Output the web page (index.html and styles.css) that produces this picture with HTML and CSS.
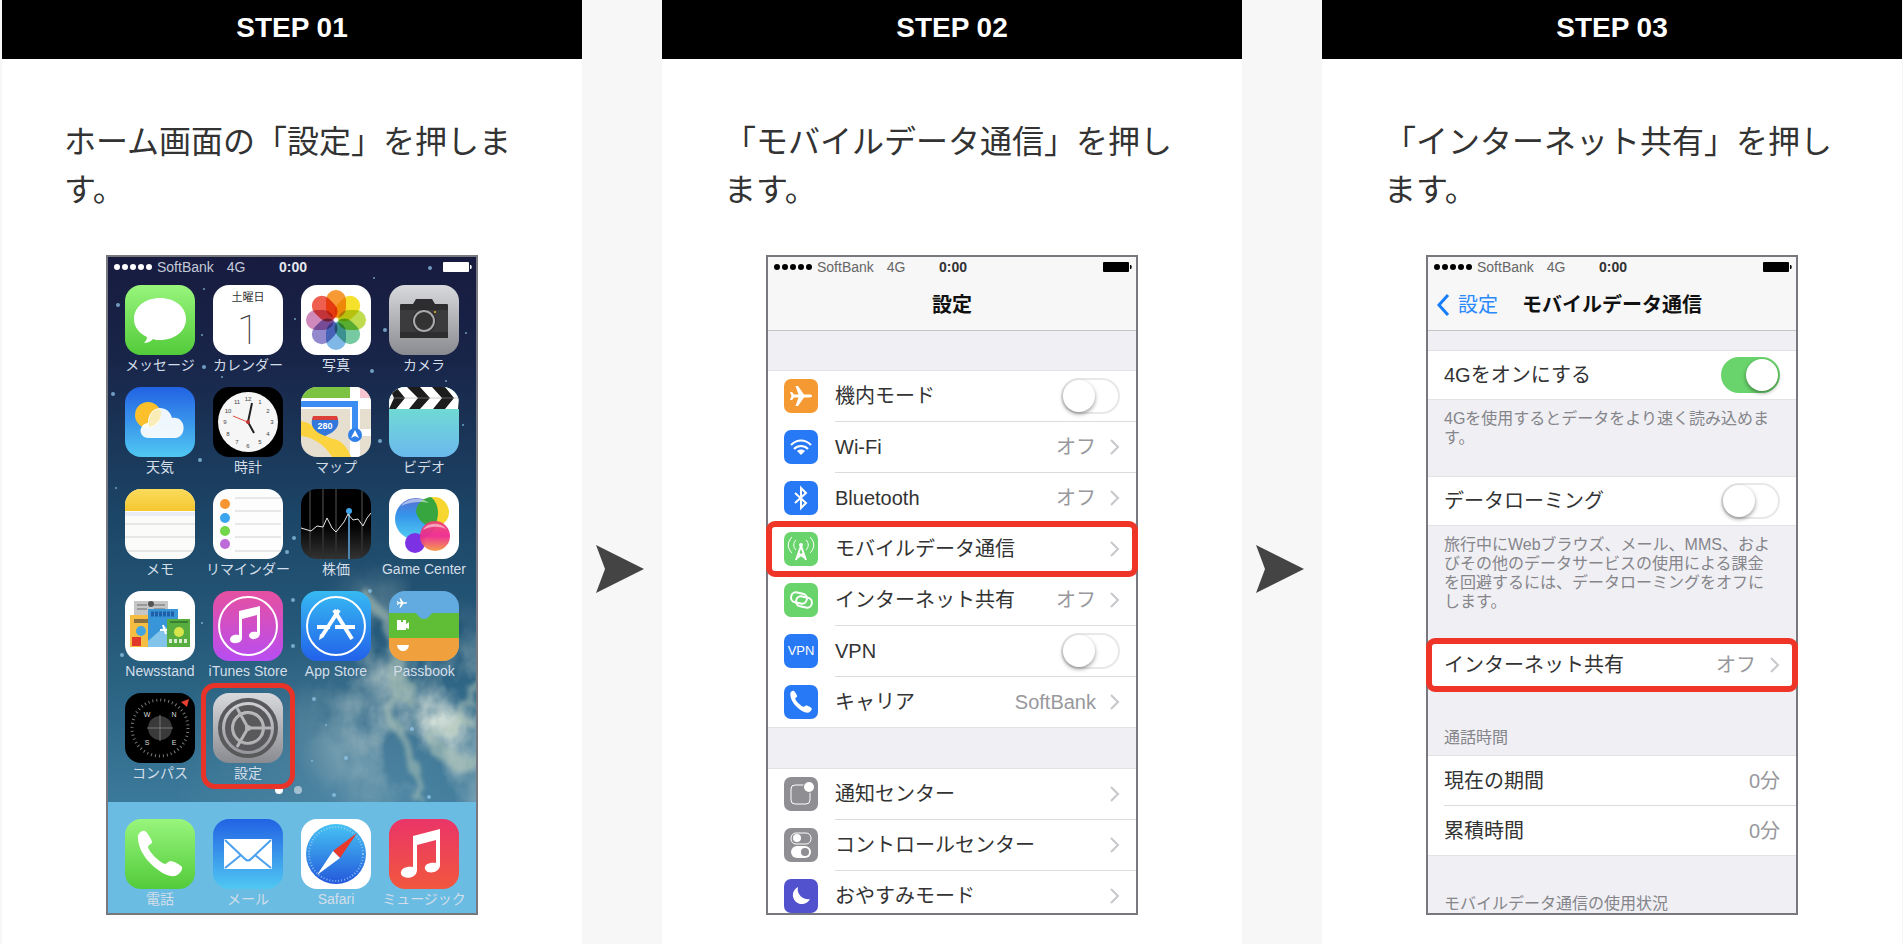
FILE: index.html
```
<!DOCTYPE html>
<html lang="ja">
  <head>
    <meta charset="UTF-8" />
    <meta name="viewport" content="width=device-width, initial-scale=1.0" />
    <title>インターネット共有の設定方法</title>
    <link rel="stylesheet" href="styles.css">
  </head>
  <body>
    <svg class="defs" aria-hidden="true">
      <defs>
        <symbol id="handset" viewBox="0 0 70 70">
          <path d="M13 19C12 15 17 11 20 12C22 13 27 21 27 23C27 25 23 26 23 28C24 33 34 43 40 45C42 45 43 42 46 42C48 42 56 46 57 48C58 51 54 56 50 57C43 58 34 53 25 44C18 37 13 27 13 19Z" />
        </symbol>
        <symbol id="note" viewBox="0 0 70 70">
          <path d="M24 17L51 10V46C51 54 38 56 36 50C35 45 41 43 47 44V21L28 26V51C28 60 14 61 12 55C11 49 18 47 24 48Z" />
        </symbol>
        <symbol id="plane" viewBox="0 0 34 34">
          <path d="M28 17C28 16 27 15.600 25 15.600H20L14 7H11.500L14.500 15.600H10L8 13H6L7.500 17L6 21H8L10 18.400H14.500L11.500 27H14L20 18.400H25C27 18.400 28 18 28 17Z" />
        </symbol>
        <symbol id="chevron" viewBox="0 0 10 18">
          <path d="M1 2L8 9L1 16" fill="none" stroke="#c7c7cc" stroke-width="2" />
        </symbol>
        <symbol id="battery" viewBox="0 0 29 10">
          <rect width="26" height="10" rx="1" />
          <path d="M27 3H28C29 4 29 6 28 7H27Z" />
        </symbol>
        <linearGradient id="green" x2="0" y2="1"><stop stop-color="#98f57c" /><stop offset="1" stop-color="#52cb3a" /></linearGradient>
        <linearGradient id="silver" x2="0" y2="1"><stop stop-color="#d8d9dc" /><stop offset="1" stop-color="#8a8b90" /></linearGradient>
        <linearGradient id="sky" x2="0" y2="1"><stop stop-color="#2262e4" /><stop offset="1" stop-color="#50c8f2" /></linearGradient>
        <linearGradient id="film" x2="0" y2="1"><stop stop-color="#72e8c8" /><stop offset="1" stop-color="#6bb9ee" /></linearGradient>
        <linearGradient id="yellow" x2="0" y2="1"><stop stop-color="#fadb5c" /><stop offset="1" stop-color="#f5c731" /></linearGradient>
        <linearGradient id="stock" x2="0" y2="1"><stop offset=".5" stop-color="#000" /><stop offset="1" stop-color="#333" /></linearGradient>
        <linearGradient id="itunes" x2="0" y2="1"><stop stop-color="#e650a0" /><stop offset="1" stop-color="#b84df2" /></linearGradient>
        <linearGradient id="appstore" x2="0" y2="1"><stop stop-color="#37baf2" /><stop offset="1" stop-color="#2261ea" /></linearGradient>
        <linearGradient id="music" x2="0" y2="1"><stop stop-color="#ea3568" /><stop offset="1" stop-color="#f1573e" /></linearGradient>
        <linearGradient id="safari" x2="0" y2="1"><stop stop-color="#46c3f3" /><stop offset="1" stop-color="#2458dc" /></linearGradient>
        <linearGradient id="bubble-blue" x2="0" y2="1"><stop stop-color="#5a6fd0" /><stop offset=".4" stop-color="#3594ea" /><stop offset="1" stop-color="#52cdf3" /></linearGradient>
        <linearGradient id="bubble-pink" x2="0" y2="1"><stop stop-color="#f0456a" /><stop offset=".5" stop-color="#ee2590" /><stop offset="1" stop-color="#f5993f" /></linearGradient>
      </defs>
    </svg>

    <main class="steps">
      <section class="step">
        <h2 class="step-title">STEP 01</h2>
        <div class="step-body">
          <p class="step-text">ホーム画面の「設定」を押します。</p>
          <div class="phone home">
            <svg class="wallpaper" viewBox="0 0 372 660" preserveAspectRatio="none" aria-hidden="true">
              <defs>
                <linearGradient id="night" x2="0" y2="1">
                  <stop stop-color="#171b3f" />
                  <stop offset=".15" stop-color="#182448" />
                  <stop offset=".4" stop-color="#1c4667" />
                  <stop offset=".65" stop-color="#2a6282" />
                  <stop offset="1" stop-color="#4c90b2" />
                </linearGradient>
                <radialGradient id="glow"><stop stop-color="#fff" /><stop offset="1" stop-color="#fff" stop-opacity="0" /></radialGradient>
                <filter id="cloud" x="0" y="0" width="1" height="1">
                  <feTurbulence type="fractalNoise" baseFrequency=".014 .011" numOctaves="5" seed="8" />
                  <feColorMatrix values="0 0 0 0 .66  0 0 0 0 .74  0 0 0 0 .68  3.4 0 0 0 -1.300" />
                </filter>
                <filter id="rough" x="-.3" y="-.3" width="1.600" height="1.600">
                  <feTurbulence type="fractalNoise" baseFrequency=".04" numOctaves="4" seed="3" />
                  <feDisplacementMap in="SourceGraphic" scale="34" />
                  <feGaussianBlur stdDeviation="2" />
                </filter>
                <mask id="fade">
                  <ellipse cx="330" cy="465" rx="150" ry="125" fill="url(#glow)" />
                  <ellipse cx="280" cy="400" rx="80" ry="110" fill="url(#glow)" opacity=".5" />
                </mask>
              </defs>
              <rect width="372" height="660" fill="url(#night)" />
              <ellipse cx="250" cy="500" rx="190" ry="130" fill="url(#glow)" opacity=".12" />
              <rect width="372" height="660" filter="url(#cloud)" mask="url(#fade)" />
              <g filter="url(#rough)" fill="none" stroke="#b5c9b8" opacity=".5">
                <path d="M262 340C284 375 302 410 296 445C272 462 302 480 312 520L316 550" stroke-width="9" />
                <path d="M380 430C356 448 362 472 336 480C314 490 338 512 378 502" stroke-width="13" />
              </g>
              <g fill="#8fc6e8" opacity=".75">
                <circle cx="324" cy="13" r="2" /><circle cx="268" cy="23" r="1" /><circle cx="12" cy="50" r="2" /><circle cx="279" cy="75" r="2" />
                <circle cx="7" cy="139" r="2" /><circle cx="98" cy="112" r="2" /><circle cx="94" cy="205" r="2" /><circle cx="274" cy="186" r="2" />
                <circle cx="266" cy="116" r="2" /><circle cx="98" cy="34" r="1" /><circle cx="357" cy="170" r="1" /><circle cx="188" cy="283" r="2" />
                <circle cx="181" cy="297" r="2" /><circle cx="10" cy="233" r="1" /><circle cx="16" cy="400" r="2" /><circle cx="187" cy="345" r="2" />
                <circle cx="187" cy="391" r="2" /><circle cx="208" cy="444" r="2" /><circle cx="96" cy="368" r="1" /><circle cx="220" cy="470" r="1" />
                <circle cx="206" cy="506" r="1" /><circle cx="240" cy="503" r="2" /><circle cx="228" cy="540" r="2" /><circle cx="30" cy="505" r="1" />
                <circle cx="306" cy="474" r="2" /><circle cx="323" cy="542" r="2" /><circle cx="264" cy="336" r="2" /><circle cx="340" cy="126" r="1" />
                <circle cx="96" cy="80" r="1" /><circle cx="189" cy="64" r="1" /><circle cx="360" cy="78" r="1" /><circle cx="116" cy="122" r="1" />
              </g>
            </svg>
            <div class="status status-light">
              <span class="carrier"><span class="signal"><i></i><i></i><i></i><i></i><i></i></span>SoftBank<span>4G</span></span>
              <time>0:00</time>
              <svg class="battery" aria-hidden="true"><use href="#battery" /></svg>
            </div>
            <nav class="apps">
              <a class="app" href="#">
                <svg class="app-icon" viewBox="0 0 70 70"><rect width="70" height="70" fill="url(#green)" /><path d="M35 13C50 13 61 22 61 34C61 46 50 55 35 55C32 55 30 55 28 54C25 57 22 58 19 58C21 56 22 54 22 52C14 48 9 42 9 34C9 22 20 13 35 13Z" fill="#fff" /></svg>
                <span>メッセージ</span>
              </a>
              <a class="app" href="#">
                <span class="app-icon calendar"><span class="weekday">土曜日</span><span class="day">1</span></span>
                <span>カレンダー</span>
              </a>
              <a class="app" href="#">
                <svg class="app-icon petals" viewBox="0 0 70 70">
                  <rect width="70" height="70" fill="#fff" />
                  <rect x="25" y="5" width="20" height="28" rx="10" fill="#f79a33" />
                  <rect x="25" y="5" width="20" height="28" rx="10" fill="#f5e12c" transform="rotate(45 35 35)" />
                  <rect x="25" y="5" width="20" height="28" rx="10" fill="#bedc4e" transform="rotate(90 35 35)" />
                  <rect x="25" y="5" width="20" height="28" rx="10" fill="#76c9a0" transform="rotate(135 35 35)" />
                  <rect x="25" y="5" width="20" height="28" rx="10" fill="#7fb7e6" transform="rotate(180 35 35)" />
                  <rect x="25" y="5" width="20" height="28" rx="10" fill="#9189cb" transform="rotate(225 35 35)" />
                  <rect x="25" y="5" width="20" height="28" rx="10" fill="#cf8abb" transform="rotate(270 35 35)" />
                  <rect x="25" y="5" width="20" height="28" rx="10" fill="#ee5f4f" transform="rotate(315 35 35)" />
                </svg>
                <span>写真</span>
              </a>
              <a class="app" href="#">
                <svg class="app-icon" viewBox="0 0 70 70">
                  <rect width="70" height="70" fill="url(#silver)" />
                  <path d="M12 19H24L27 14H43L46 19H58C59 19 59 20 59 20V52C59 53 59 53 58 53H12C11 53 11 53 11 52V20C11 19 12 19 12 19Z" fill="#2d2d2f" />
                  <path d="M11 25H59V47H11Z" fill="#3b3b3d" />
                  <circle cx="35" cy="36" r="12" fill="#29292b" /><circle cx="35" cy="36" r="10" fill="#333" stroke="#a9a9ac" stroke-width="2" />
                  <circle cx="46" cy="27" r="1" fill="#f5b32c" />
                </svg>
                <span>カメラ</span>
              </a>

              <a class="app" href="#">
                <svg class="app-icon" viewBox="0 0 70 70"><rect width="70" height="70" fill="url(#sky)" /><circle cx="23" cy="28" r="13" fill="#fbc02b" /><path d="M24 51C13 51 13 37 23 36C23 17 44 17 47 31C62 29 62 51 50 51Z" fill="#fff" opacity=".92" /><path d="M24 34C25 24 33 20 36 24C37 31 32 38 24 40Z" fill="#f6e6a0" opacity=".7" /></svg>
                <span>天気</span>
              </a>
              <a class="app" href="#">
                <svg class="app-icon" viewBox="0 0 70 70">
                  <rect width="70" height="70" fill="#000" /><circle cx="35" cy="35" r="30" fill="#f6f6f6" />
                  <g class="clock-face">
                    <text x="35" y="14">12</text><text x="47" y="17">1</text><text x="55" y="26">2</text><text x="59" y="37">3</text>
                    <text x="55" y="49">4</text><text x="47" y="57">5</text><text x="35" y="61">6</text><text x="24" y="57">7</text>
                    <text x="15" y="49">8</text><text x="12" y="37">9</text><text x="15" y="26">10</text><text x="24" y="17">11</text>
                  </g>
                  <path d="M35 35L39 16M35 35L41 46" stroke="#222" stroke-width="2" /><path d="M37 36L20 29" stroke="#e24b3b" />
                  <circle cx="35" cy="35" r="2" fill="#b33" />
                </svg>
                <span>時計</span>
              </a>
              <a class="app" href="#">
                <svg class="app-icon" viewBox="0 0 70 70">
                  <rect width="70" height="70" fill="#e6dfd0" /><path d="M0 0H49V11H0Z" fill="#7cc344" /><path d="M59 0H70V11H59Z" fill="#f6c5cf" />
                  <path d="M0 11H70V22H0ZM49 0H59V70H49ZM59 42H70V49H59Z" fill="#fff" />
                  <path d="M0 34C16 37 20 50 33 52C42 54 47 62 50 70H31C24 58 12 50 0 49Z" fill="#fbd33f" />
                  <path d="M0 17H54V44" fill="none" stroke="#3b8df2" stroke-width="6" />
                  <circle cx="54" cy="48" r="7" fill="#2f7fe8" /><path d="M54 43L58 51L54 49L50 51Z" fill="#fff" />
                  <path d="M12 30C16 32 19 31 24 29C29 31 32 32 36 30C40 38 35 45 24 49C13 45 8 38 12 30Z" fill="#3277dc" /><path d="M12 29H36L37 33H11Z" fill="#dd4038" />
                  <text class="shield" x="24" y="42">280</text>
                </svg>
                <span>マップ</span>
              </a>
              <a class="app" href="#">
                <svg class="app-icon" viewBox="0 0 70 70">
                  <rect width="70" height="70" fill="url(#film)" /><path d="M0 0H70V22H0Z" fill="#fff" />
                  <path d="M0 0H7L16 11L7 22H0L5 11ZM18 0H31L41 11L31 22H20L29 11ZM43 0H56L65 11L56 22H44L53 11ZM67 0H70V22H69L70 11Z" fill="#1c1c1c" />
                  <path d="M0 11H70" stroke="#999" opacity=".5" />
                </svg>
                <span>ビデオ</span>
              </a>

              <a class="app" href="#">
                <svg class="app-icon" viewBox="0 0 70 70"><rect width="70" height="70" fill="#fbfbfa" /><path d="M0 0H70V22H0Z" fill="url(#yellow)" /><path d="M0 23H70V27H0Z" fill="#e9ecf4" /><path d="M0 35H70M0 48H70M0 62H70" stroke="#d2d2d2" /></svg>
                <span>メモ</span>
              </a>
              <a class="app" href="#">
                <svg class="app-icon" viewBox="0 0 70 70"><rect width="70" height="70" fill="#fdfdfd" /><path d="M22 9H68M22 22H68M22 35H68M22 48H68M22 62H68" stroke="#d2d2d2" /><circle cx="12" cy="15" r="5" fill="#f79533" /><circle cx="12" cy="29" r="5" fill="#3ba6ef" /><circle cx="12" cy="42" r="5" fill="#74d649" /><circle cx="12" cy="55" r="5" fill="#bd6bd8" /></svg>
                <span>リマインダー</span>
              </a>
              <a class="app" href="#">
                <svg class="app-icon" viewBox="0 0 70 70"><rect width="70" height="70" fill="url(#stock)" /><path d="M9 0V70M22 0V70M35 0V70M61 0V70" stroke="#2c2c2c" stroke-width="2" /><path d="M48 22V70" stroke="#4d86ae" stroke-width="2" /><path d="M0 39L10 42L16 37L22 38L26 29L31 39L35 43L43 33L47 25L52 31L57 30L62 37L66 29L70 24" fill="none" stroke="#e8e8e8" stroke-width="1" /><circle cx="48" cy="22" r="3" fill="#3fa4ea" /></svg>
                <span>株価</span>
              </a>
              <a class="app" href="#">
                <svg class="app-icon" viewBox="0 0 70 70"><rect width="70" height="70" fill="#fff" /><circle cx="45" cy="23" r="15" fill="#f6d62f" /><circle cx="27" cy="30" r="21" fill="url(#bubble-blue)" /><path d="M42 8C52 16 50 32 44 38C34 36 28 30 27 22C28 14 34 9 42 8Z" fill="#37a63e" /><circle cx="26" cy="54" r="10" fill="#7c32e4" /><circle cx="46" cy="47" r="15" fill="url(#bubble-pink)" opacity=".94" /><path d="M12 17C17 9 32 7 40 14C32 12 20 13 12 17ZM34 41C38 33 52 33 57 40C50 37 42 37 34 41Z" fill="#fff" opacity=".5" /></svg>
                <span>Game Center</span>
              </a>

              <a class="app" href="#">
                <svg class="app-icon" viewBox="0 0 70 70">
                  <rect width="70" height="70" fill="#fff" /><rect x="9" y="10" width="34" height="16" fill="#c6c6c6" /><path d="M12 14H22M29 14H40M12 18H22M29 18H40" stroke="#999" stroke-width="2" /><circle cx="26" cy="13" r="3" fill="#555" />
                  <rect x="5" y="24" width="20" height="32" fill="#f5bd42" /><path d="M9 30H23" stroke="#8d7040" stroke-width="4" /><circle cx="16" cy="40" r="5" fill="#45a5dd" /><rect x="7" y="46" width="9" height="9" fill="#e0392c" />
                  <rect x="23" y="18" width="30" height="38" fill="#3795d8" /><path d="M26 23H50" stroke="#1e5fa5" stroke-width="5" stroke-dasharray="3 1" /><path d="M23 50L40 35L43 39V56H23Z" fill="#83c4ea" /><path d="M38 34L41 43M35 39H43" stroke="#fff" stroke-width="2" />
                  <rect x="42" y="28" width="23" height="28" fill="#57ad3f" /><path d="M45 31H63" stroke="#387f32" stroke-width="2" /><circle cx="54" cy="41" r="5" fill="#d7e54b" /><path d="M44 50H63" stroke="#d9edd3" stroke-width="4" stroke-dasharray="3 2" />
                </svg>
                <span>Newsstand</span>
              </a>
              <a class="app" href="#">
                <svg class="app-icon" viewBox="0 0 70 70"><rect width="70" height="70" fill="url(#itunes)" /><circle cx="35" cy="35" r="29" fill="none" stroke="#fff" stroke-width="2" /><path d="M26 20L47 15V42C47 49 37 50 36 45C36 41 40 40 44 41V24L29 28V47C29 53 18 54 17 49C17 44 22 43 26 44Z" fill="#fff" /></svg>
                <span>iTunes Store</span>
              </a>
              <a class="app" href="#">
                <svg class="app-icon" viewBox="0 0 70 70"><rect width="70" height="70" fill="url(#appstore)" /><circle cx="35" cy="35" r="29" fill="none" stroke="#fff" stroke-width="2" /><path d="M38 19L21 45M33 19L51 48M16 36H29M34 36H54" fill="none" stroke="#fff" stroke-width="4" /><path d="M19 43L23 46L18 49Z" fill="#fff" /></svg>
                <span>App Store</span>
              </a>
              <a class="app" href="#">
                <svg class="app-icon" viewBox="0 0 70 70"><rect width="70" height="70" fill="#62abe0" /><path d="M0 22H26C29 22 29 28 35 28C41 28 41 22 44 22H70V47H0Z" fill="#5fbe36" /><path d="M0 47H70V70H0Z" fill="#f0a03c" /><use href="#plane" x="5" y="4" width="16" height="16" fill="#fff" /><path d="M8 29H12V31H14V29H17V33L20 31V38L17 37V39H8Z" fill="#fff" /><path d="M8 54H20C19 62 9 62 8 54Z" fill="#fff" /></svg>
                <span>Passbook</span>
              </a>

              <a class="app" href="#">
                <svg class="app-icon" viewBox="0 0 70 70">
                  <rect width="70" height="70" fill="#000" /><circle cx="35" cy="35" r="28" fill="none" stroke="#777" stroke-width="3" stroke-dasharray="1 3" />
                  <circle cx="35" cy="35" r="12" fill="#3a3a3a" /><path d="M35 22V48M22 35H48" stroke="#777" stroke-width="1" /><path d="M56 9L64 6L62 14Z" fill="#e8402f" />
                  <g class="compass-points"><text x="22" y="24">W</text><text x="49" y="24">N</text><text x="22" y="52">S</text><text x="49" y="52">E</text></g>
                </svg>
                <span>コンパス</span>
              </a>
              <a class="app app-target" href="#">
                <svg class="app-icon" viewBox="0 0 70 70">
                  <rect width="70" height="70" fill="url(#silver)" />
                  <g fill="none" stroke="#59595c"><circle cx="35" cy="35" r="28" stroke-width="4" /><circle cx="35" cy="35" r="20" stroke-width="6" /></g>
                  <circle cx="35" cy="35" r="14" fill="#59595c" /><circle cx="35" cy="35" r="15" fill="none" stroke="#b4b4b7" stroke-width="2" />
                  <path d="M35 35H58M35 35L24 15M35 35L24 54" stroke="#b4b4b7" stroke-width="3" /><circle cx="35" cy="35" r="3" fill="#b4b4b7" />
                </svg>
                <span>設定</span>
              </a>
            </nav>
            <div class="pager"><i></i><i></i></div>
            <nav class="dock">
              <a class="app" href="#">
                <svg class="app-icon" viewBox="0 0 70 70"><rect width="70" height="70" fill="url(#green)" /><use href="#handset" width="70" height="70" fill="#fff" /></svg>
                <span>電話</span>
              </a>
              <a class="app" href="#">
                <svg class="app-icon" viewBox="0 0 70 70"><rect width="70" height="70" fill="url(#sky)" /><rect x="11" y="20" width="48" height="30" rx="1" fill="#fff" /><path d="M12 21L32 40C34 42 36 42 38 40L58 21M12 49L28 36M58 49L42 36" fill="none" stroke="#4aa0ee" stroke-width="2" /></svg>
                <span>メール</span>
              </a>
              <a class="app" href="#">
                <svg class="app-icon" viewBox="0 0 70 70"><rect width="70" height="70" fill="#fff" /><circle cx="35" cy="35" r="30" fill="url(#safari)" /><circle cx="35" cy="35" r="27" fill="none" stroke="#a8d8f8" stroke-width="2" stroke-dasharray="1 2" opacity=".7" /><path d="M56 14L39 39L32 32Z" fill="#e9392c" /><path d="M16 56L32 32L39 39Z" fill="#fff" /></svg>
                <span>Safari</span>
              </a>
              <a class="app" href="#">
                <svg class="app-icon" viewBox="0 0 70 70"><rect width="70" height="70" fill="url(#music)" /><use href="#note" width="70" height="70" fill="#fff" /></svg>
                <span>ミュージック</span>
              </a>
            </nav>
          </div>
        </div>
      </section>

      <svg class="arrow" viewBox="0 0 48 48" aria-hidden="true"><path d="M0 0L48 24L0 48L9 24Z" /></svg>

      <section class="step">
        <h2 class="step-title">STEP 02</h2>
        <div class="step-body">
          <p class="step-text">「モバイルデータ通信」を押します。</p>
          <div class="phone">
            <header class="topbar">
              <div class="status">
                <span class="carrier"><span class="signal"><i></i><i></i><i></i><i></i><i></i></span>SoftBank<span>4G</span></span>
                <time>0:00</time>
                <svg class="battery" aria-hidden="true"><use href="#battery" /></svg>
              </div>
              <div class="navbar"><h3>設定</h3></div>
            </header>
            <ul class="list list-icons">
              <li>
                <label class="row" for="airplane">
                  <svg class="row-icon orange" viewBox="0 0 34 34"><use href="#plane" fill="#fff" /></svg>
                  <span class="row-label">機内モード</span>
                  <input class="switch" type="checkbox" id="airplane" />
                </label>
              </li>
              <li>
                <a class="row" href="#">
                  <svg class="row-icon blue" viewBox="0 0 34 34"><g fill="none" stroke="#fff" stroke-width="2"><path d="M7 15C13 9 21 9 27 15M10 19C14 15 20 15 24 19" /></g><path d="M13 21C15 19 19 19 21 21L17 25Z" fill="#fff" /></svg>
                  <span class="row-label">Wi-Fi</span><span class="value">オフ</span>
                  <svg class="chevron"><use href="#chevron" /></svg>
                </a>
              </li>
              <li>
                <a class="row" href="#">
                  <svg class="row-icon blue" viewBox="0 0 34 34"><path d="M11 12L22 22L17 27V7L22 12L11 22" fill="none" stroke="#fff" stroke-width="2" /></svg>
                  <span class="row-label">Bluetooth</span><span class="value">オフ</span>
                  <svg class="chevron"><use href="#chevron" /></svg>
                </a>
              </li>
              <li>
                <a class="row row-target" href="#">
                  <svg class="row-icon lime" viewBox="0 0 34 34"><g fill="none" stroke="#fff"><path d="M17 14L12 28M17 14L22 28M14 21L21 26M20 21L13 26" stroke-width="2" /><path d="M12 8C9 11 9 15 12 18M8 5C3 10 3 16 8 21M22 8C25 11 25 15 22 18M26 5C31 10 31 16 26 21" stroke-width="1" /></g><circle cx="17" cy="13" r="2" fill="#fff" /></svg>
                  <span class="row-label">モバイルデータ通信</span>
                  <svg class="chevron"><use href="#chevron" /></svg>
                </a>
              </li>
              <li>
                <a class="row" href="#">
                  <svg class="row-icon lime" viewBox="0 0 34 34"><g fill="none" stroke="#fff" stroke-width="2"><rect x="7" y="10" width="16" height="10" rx="5" transform="rotate(12 15 15)" /><rect x="12" y="14" width="16" height="10" rx="5" transform="rotate(12 20 19)" /></g></svg>
                  <span class="row-label">インターネット共有</span><span class="value">オフ</span>
                  <svg class="chevron"><use href="#chevron" /></svg>
                </a>
              </li>
              <li>
                <label class="row" for="vpn">
                  <span class="row-icon blue vpn">VPN</span>
                  <span class="row-label">VPN</span>
                  <input class="switch" type="checkbox" id="vpn" />
                </label>
              </li>
              <li>
                <a class="row" href="#">
                  <svg class="row-icon blue" viewBox="0 0 34 34"><use href="#handset" width="34" height="34" fill="#fff" /></svg>
                  <span class="row-label">キャリア</span><span class="value">SoftBank</span>
                  <svg class="chevron"><use href="#chevron" /></svg>
                </a>
              </li>
            </ul>
            <ul class="list list-icons">
              <li>
                <a class="row" href="#">
                  <svg class="row-icon gray" viewBox="0 0 34 34"><rect x="7" y="8" width="19" height="19" rx="4" fill="none" stroke="#fff" stroke-width="1" /><circle cx="25" cy="10" r="6" fill="#8e8e93" /><circle cx="25" cy="10" r="5" fill="#fff" /></svg>
                  <span class="row-label">通知センター</span>
                  <svg class="chevron"><use href="#chevron" /></svg>
                </a>
              </li>
              <li>
                <a class="row" href="#">
                  <svg class="row-icon gray" viewBox="0 0 34 34"><rect x="7" y="5" width="20" height="11" rx="5" fill="none" stroke="#fff" stroke-width="1" /><circle cx="13" cy="10" r="4" fill="#fff" /><rect x="7" y="18" width="20" height="12" rx="6" fill="#fff" /><circle cx="21" cy="24" r="4" fill="#8e8e93" /></svg>
                  <span class="row-label">コントロールセンター</span>
                  <svg class="chevron"><use href="#chevron" /></svg>
                </a>
              </li>
              <li>
                <a class="row" href="#">
                  <svg class="row-icon purple" viewBox="0 0 34 34"><path d="M14 8A9 9 0 1 0 26 20A10 10 0 0 1 14 8Z" fill="#fff" /></svg>
                  <span class="row-label">おやすみモード</span>
                  <svg class="chevron"><use href="#chevron" /></svg>
                </a>
              </li>
            </ul>
          </div>
        </div>
      </section>

      <svg class="arrow" viewBox="0 0 48 48" aria-hidden="true"><path d="M0 0L48 24L0 48L9 24Z" /></svg>

      <section class="step">
        <h2 class="step-title">STEP 03</h2>
        <div class="step-body">
          <p class="step-text">「インターネット共有」を押します。</p>
          <div class="phone">
            <header class="topbar">
              <div class="status">
                <span class="carrier"><span class="signal"><i></i><i></i><i></i><i></i><i></i></span>SoftBank<span>4G</span></span>
                <time>0:00</time>
                <svg class="battery" aria-hidden="true"><use href="#battery" /></svg>
              </div>
              <div class="navbar">
                <a class="back" href="#"><svg viewBox="0 0 14 24"><path d="M12 2L3 12L12 22" fill="none" stroke="#177efb" stroke-width="3" /></svg>設定</a>
                <h3>モバイルデータ通信</h3>
              </div>
            </header>
            <div class="list list-first">
              <label class="row" for="lte"><span class="row-label">4Gをオンにする</span><input class="switch" type="checkbox" id="lte" checked /></label>
            </div>
            <p class="note">4Gを使用するとデータをより速く読み込めます。</p>
            <div class="list">
              <label class="row" for="roaming"><span class="row-label">データローミング</span><input class="switch" type="checkbox" id="roaming" /></label>
            </div>
            <p class="note">旅行中にWebブラウズ、メール、MMS、およびその他のデータサービスの使用による課金を回避するには、データローミングをオフにします。</p>
            <div class="list">
              <a class="row row-target" href="#"><span class="row-label">インターネット共有</span><span class="value">オフ</span><svg class="chevron"><use href="#chevron" /></svg></a>
            </div>
            <h4 class="list-title">通話時間</h4>
            <ul class="list list-plain">
              <li><div class="row"><span class="row-label">現在の期間</span><span class="value">0分</span></div></li>
              <li><div class="row"><span class="row-label">累積時間</span><span class="value">0分</span></div></li>
            </ul>
            <h4 class="list-title">モバイルデータ通信の使用状況</h4>
          </div>
        </div>
      </section>
    </main>
  </body>
</html>
```
FILE: styles.css
```
* {
  box-sizing: border-box;
}
body {
  margin: 0;
  background-color: #f7f7f7;
  color: #333;
  font-family: "Liberation Sans", "Noto Sans CJK JP", sans-serif;
}
h2,
h3,
h4,
p,
ul {
  margin: 0;
  padding: 0;
}
ul {
  list-style: none;
}
a {
  color: inherit;
  text-decoration: none;
}
.defs {
  position: absolute;
  width: 0;
  height: 0;
}

/* steps */
.steps {
  display: flex;
  min-height: 100vh;
  padding: 0 1px 0 2px;
}
.step {
  flex: 1;
  min-width: 0;
  background-color: white;
}
.step-title {
  padding: 8px 0 11px;
  background-color: black;
  color: white;
  font-size: 28px;
  line-height: 40px;
  text-align: center;
}
.step-body {
  padding: 59px 62px 28px;
}
.step-text {
  margin-bottom: 41px;
  font-size: 32px;
  line-height: 48px;
}
.arrow {
  flex: none;
  width: 48px;
  height: 48px;
  margin: 545px 18px 0 14px;
  fill: #444;
}

/* phone */
.phone {
  position: relative;
  display: flex;
  flex-direction: column;
  width: 372px;
  max-width: 100%;
  height: 660px;
  margin: 0 auto;
  overflow: hidden;
  background-color: #efeff4;
}
.phone::after {
  content: "";
  position: absolute;
  inset: 0;
  border: 2px solid #77797e;
  pointer-events: none;
}
.phone > * {
  flex: none;
}
.status {
  display: grid;
  grid-template-columns: 1fr auto 1fr;
  align-items: center;
  height: 24px;
  padding: 0 6px 0 8px;
  color: #333;
  font-size: 14px;
  line-height: 24px;
}
.status time {
  font-weight: bold;
}
.status-light {
  color: #e4e8ee;
}
.carrier {
  display: flex;
  align-items: center;
  color: #666;
}
.status-light .carrier {
  color: #c3cad8;
}
.carrier span + span {
  margin-left: 13px;
}
.signal {
  display: flex;
  gap: 2px;
  margin-right: 5px;
}
.signal i {
  width: 6px;
  height: 6px;
  border-radius: 50%;
  background-color: black;
}
.status-light .signal i {
  background-color: white;
}
.battery {
  justify-self: end;
  width: 29px;
  height: 10px;
}
.status-light .battery {
  fill: white;
}

/* home screen */
.home {
  background-color: #1c4667;
  color: #d3dee8;
}
.wallpaper {
  position: absolute;
  inset: 0;
  width: 100%;
  height: 100%;
}
.home > .status,
.home > .apps,
.home > .pager,
.home > .dock {
  position: relative;
}
.apps,
.dock {
  display: grid;
  grid-template-columns: repeat(4, 70px);
  justify-content: space-between;
  gap: 12px 0;
  padding: 6px 19px 0;
}
.app {
  position: relative;
  display: flex;
  flex-direction: column;
  align-items: center;
  font-size: 14px;
  line-height: 20px;
  white-space: nowrap;
}
.app-icon {
  width: 70px;
  height: 70px;
  border-radius: 16px;
  overflow: hidden;
}
.calendar {
  display: flex;
  flex-direction: column;
  align-items: center;
  background-color: white;
  color: #333;
}
.weekday {
  padding-top: 4px;
  font-size: 11px;
  line-height: 17px;
}
.day {
  font-family: Roboto, "Liberation Sans", sans-serif;
  font-size: 40px;
  font-weight: 100;
  line-height: 49px;
}
.petals {
  isolation: isolate;
}
.petals rect {
  mix-blend-mode: multiply;
}
.clock-face,
.shield,
.compass-points {
  font-size: 6px;
  text-anchor: middle;
}
.clock-face {
  fill: #444;
}
.shield {
  font-size: 9px;
  font-weight: bold;
  fill: white;
}
.compass-points {
  font-size: 7px;
  fill: #ddd;
}
.app-target::after {
  content: "";
  position: absolute;
  inset: -10px -12px -6px;
  z-index: 1;
  border: 5px solid #e83428;
  border-radius: 14px;
}
.apps {
  z-index: 1;
}
.pager {
  display: flex;
  justify-content: center;
  gap: 11px;
  padding: 3px 7px 8px 0;
}
.pager i {
  width: 8px;
  height: 8px;
  border-radius: 50%;
  background-color: white;
}
.pager i + i {
  opacity: 0.5;
}
.dock {
  flex: 1 0 auto;
  padding-top: 17px;
  background-color: #6abce3;
}

/* settings screens */
.topbar {
  border-bottom: 1px solid #c4c4c8;
  background-color: #f7f7f8;
}
.navbar {
  display: grid;
  grid-template-columns: 1fr auto 1fr;
  align-items: center;
  height: 51px;
  padding: 0 10px;
  color: #111;
  font-size: 20px;
  line-height: 50px;
}
.navbar h3 {
  grid-column: 2;
  font-size: 20px;
}
.back {
  display: flex;
  align-items: center;
  gap: 8px;
  color: #2b8afb;
}
.back svg {
  width: 14px;
  height: 24px;
}
.list {
  border-top: 1px solid #e2e2e6;
  border-bottom: 1px solid #e2e2e6;
  background-color: white;
}
.row {
  position: relative;
  display: flex;
  align-items: center;
  height: 48px;
  padding: 0 18px;
  font-size: 20px;
  line-height: 48px;
}
.row-label {
  flex: 1;
}
.list-icons {
  margin-top: 39px;
}
.list-icons + .list-icons {
  margin-top: 40px;
}
.list-icons .row {
  height: 50px;
}
.list-plain .row {
  height: 49px;
}
.list-icons li + li .row::before,
.list-plain li + li .row::before {
  content: "";
  position: absolute;
  top: -1px;
  right: 0;
  left: 69px;
  height: 1px;
  background-color: #dcdce0;
}
.list-icons li + li,
.list-plain li + li {
  padding-top: 1px;
}
.list-plain li + li .row::before {
  left: 18px;
}
.row-icon {
  width: 34px;
  height: 34px;
  margin-right: 17px;
  border-radius: 7px;
}
.orange {
  background-color: #f59a32;
}
.blue {
  background-color: #2779f6;
}
.lime {
  background-color: #6ad46c;
}
.gray {
  background-color: #8e8e93;
}
.purple {
  background-color: #5352ce;
}
.vpn {
  color: white;
  font-size: 13px;
  line-height: 34px;
  text-align: center;
}
.value {
  color: #98989d;
}
.chevron {
  width: 10px;
  height: 18px;
  margin-left: 14px;
}
.switch {
  appearance: none;
  width: 59px;
  height: 36px;
  margin: 0;
  border: 2px solid #e8e8e8;
  border-radius: 18px;
  background-color: white;
}
.switch::before {
  content: "";
  display: block;
  width: 32px;
  height: 32px;
  border-radius: 50%;
  background-color: white;
  box-shadow: 0 2px 4px rgba(0, 0, 0, 0.4);
}
.switch:checked {
  border-color: #6ad46c;
  background-color: #6ad46c;
}
.switch:checked::before {
  margin-left: auto;
}
.row-target::after {
  content: "";
  position: absolute;
  inset: -3px 0;
  z-index: 1;
  border: 6px solid #ee3527;
  border-radius: 9px;
}
.list-first {
  margin-top: 19px;
}
.note,
.list-title {
  color: #85858a;
  font-size: 16px;
  font-weight: normal;
  line-height: 19px;
}
.note {
  padding: 9px 20px 29px 18px;
}
.list-title {
  padding: 38px 18px 8px;
}
```
